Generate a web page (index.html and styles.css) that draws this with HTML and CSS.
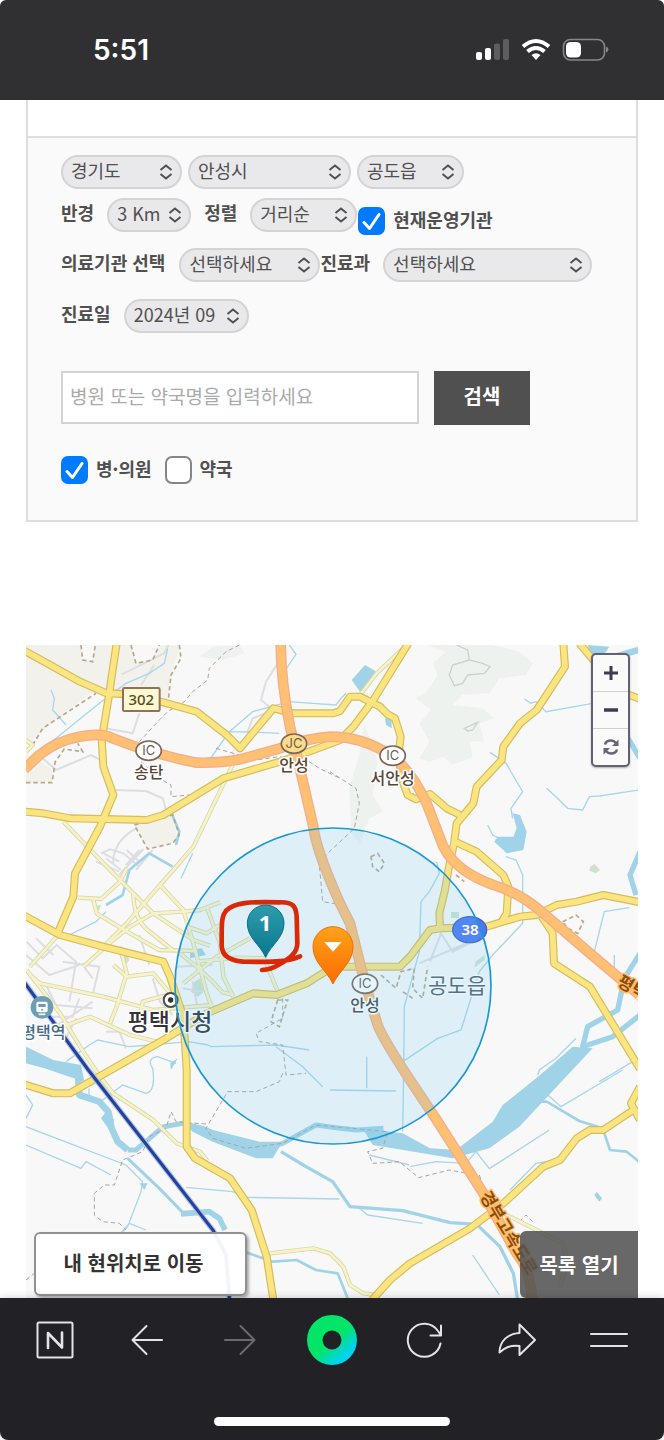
FILE: index.html
```html
<!DOCTYPE html>
<html lang="ko">
<head>
<meta charset="utf-8">
<meta name="viewport" content="width=device-width, initial-scale=1">
<title>병원·약국 찾기</title>
<link rel="stylesheet" href="styles.css">
</head>
<body>
<header class="status">
  <time class="clock">5:51</time>
  <svg class="status-icons" width="134" height="24" viewBox="475 38 134 24" aria-hidden="true">
    <g fill="#fff"><rect x="476" y="52" width="6" height="8" rx="2"/><rect x="485" y="48" width="6" height="12" rx="2"/></g>
    <g fill="#5d5d60"><rect x="494" y="43.500" width="6" height="16.500" rx="2"/><rect x="503" y="39" width="6" height="21" rx="2"/></g>
    <g fill="none" stroke="#fff" stroke-width="4"><path d="M523 46.500Q536 35.500 549 46.500"/><path d="M527.500 51.500Q536 44.500 544.500 51.500"/></g>
    <path d="M531.500 55Q536 51.500 540.500 55L536 60Z" fill="#fff"/>
    <rect x="563.500" y="39.500" width="41" height="20.500" rx="7" fill="none" stroke="#87878a" stroke-width="1.600"/>
    <rect x="566" y="42" width="15" height="15.500" rx="4.500" fill="#fff"/>
    <path d="M606 46.500q2.500 1 2.500 3t-2.500 3z" fill="#87878a"/>
  </svg>
</header>

<main class="page">
  <form class="search">
    <div class="filters">
      <div class="row row-region">
        <select class="pick w-121" aria-label="시도"><option>경기도</option></select>
        <select class="pick w-163" aria-label="시군구"><option>안성시</option></select>
        <select class="pick w-107" aria-label="읍면동"><option>공도읍</option></select>
      </div>
      <div class="row row-range">
        <div class="field"><label for="radius">반경</label><select class="pick w-84" id="radius"><option>3 Km</option></select></div>
        <div class="field field-sort"><label for="sort">정렬</label><select class="pick w-107" id="sort"><option>거리순</option></select></div>
        <label class="check check-low"><input type="checkbox" checked><span>현재운영기관</span></label>
      </div>
      <div class="row row-type">
        <div class="field field-wide"><label for="kind">의료기관 선택</label><select class="pick w-141" id="kind"><option>선택하세요</option></select></div>
        <div class="field"><label for="dept">진료과</label><select class="pick w-209" id="dept"><option>선택하세요</option></select></div>
      </div>
      <div class="row row-date">
        <div class="field"><label for="day">진료일</label><select class="pick w-125" id="day"><option>2024년 09</option></select></div>
      </div>
      <div class="row row-query">
        <input class="query" type="text" placeholder="병원 또는 약국명을 입력하세요" aria-label="병원 또는 약국명">
        <button class="go" type="button">검색</button>
      </div>
      <div class="row row-kinds">
        <label class="check"><input type="checkbox" checked><span>병·의원</span></label>
        <label class="check"><input type="checkbox"><span>약국</span></label>
      </div>
    </div>
  </form>

  <section class="map" aria-label="지도">
    <svg class="map-art" viewBox="0 0 1836 1959" role="img" aria-label="안성시 공도읍 주변 지도">
      <defs>
        <linearGradient id="teal" x1="0" y1="0" x2="0" y2="1"><stop offset="0" stop-color="#2f9cac"/><stop offset="1" stop-color="#08788f"/></linearGradient>
        <linearGradient id="amber" x1="0" y1="0" x2="0" y2="1"><stop offset="0" stop-color="#ffa21a"/><stop offset="1" stop-color="#fb6c00"/></linearGradient>
        <path id="motorway-a" d="M-5 372L40 330Q90 288 160 275T260 280L322 303Q440 340 512 353Q580 355 642 343L762 310Q850 278 912 275Q1010 275 1092 330Q1152 370 1202 475L1252 605Q1290 680 1402 720Q1485 745 1552 805L1692 925L1840 1050"/>
        <path id="motorway-b" d="M764 -5Q765 110 792 245L832 415L862 545Q870 615 942 775L972 835L1017 1015L1055 1140Q1070 1180 1152 1305L1232 1425L1372 1645L1472 1825Q1517 1880 1517 1965"/>
        <g id="main-roads">
          <path d="M-5 17L82 65L162 110L242 145L292 147L412 172L512 200L602 270L642 310L742 190L802 205L922 205L942 198L972 155L1002 155L1062 185L1085 208L1107 220L1124 275L1117 335L1130 410L1145 450L1170 463L1212 447L1262 490L1302 510"/>
          <path d="M272 -5L254 115L250 145L227 285L232 365L262 450L222 545L147 685L142 755L97 860"/>
          <path d="M-5 500L52 505L132 520L362 525L412 510L592 400L762 350L862 315L942 285L982 245L1042 165L1147 -5"/>
          <path d="M1612 -5L1617 65L1532 195L1482 235L1432 305L1427 345L1352 425L1342 475L1292 535L1284 595L1267 675L1257 735L1240 805L1242 850"/>
          <path d="M1287 590L1352 620L1432 690L1447 725L1442 805L1427 830"/>
          <path d="M1660 -5L1702 45L1772 135L1842 162"/>
          <path d="M-5 812L102 870L232 905L412 950L432 995L472 1115L482 1275L482 1505L507 1540L612 1600L677 1695L722 1835L742 1965"/>
          <path d="M-5 1318L82 1345L132 1345L412 1185L542 1105L682 1045L752 1050L842 1015L922 965L1122 965L1152 935L1212 855L1242 850L1382 845L1482 815L1532 810L1592 780L1652 770L1732 750L1842 772"/>
          <path d="M1547 815L1580 865L1584 955L1692 1025L1842 1272"/>
          <path d="M1038 1965L1092 1905L1152 1855L1332 1750L1432 1675L1552 1565L1602 1545L1652 1480L1692 1455L1732 1455L1822 1395M1842 1325L1815 1375L1842 1425"/>
        </g>
        <g id="side-roads">
          <path d="M622 355L502 605L442 675L402 720L302 835L232 905"/>
          <path d="M112 530L252 675L322 745L382 805L502 885L552 902"/>
          <path d="M157 758L225 762L282 710L302 670"/>
          <path d="M202 765L212 805L312 865L400 915L512 918"/>
          <path d="M402 720L472 795L502 895L542 1045L562 1100"/>
          <path d="M582 772L522 795L472 800L382 805L312 845L262 885L172 965"/>
          <path d="M542 785L582 895L592 995L622 1055"/>
          <path d="M672 880L572 935L472 1015"/>
          <path d="M462 925L512 965L560 1010L590 1042L622 1050"/>
          <path d="M512 950L632 938L715 940L757 1045"/>
          <path d="M282 905L302 985L272 1085L252 1135"/>
          <path d="M262 960L302 995L382 985L432 1045"/>
          <path d="M12 990L42 1015L232 1055L382 1095L562 1080"/>
          <path d="M2 975L102 1105L162 1205L222 1295L262 1345L382 1425L452 1495L522 1520L544 1547"/>
          <path d="M82 1155L192 1115L312 1170L392 1190"/>
          <path d="M12 965L92 875"/>
          <path d="M322 745Q322 820 365 855T440 915"/>
          <path d="M482 845L542 865L582 840"/>
          <path d="M422 1050L350 1070L332 1170"/>
          <path d="M1002 150L1052 85L1142 0"/>
          <path d="M732 1825L862 1810L912 1825L952 1865L972 1920L1012 1945L1052 1950"/>
          <path d="M1432 1705L1532 1755L1612 1795L1622 1855L1602 1925"/>
          <path d="M0 285L20 300L0 320"/>
        </g>
      </defs>

      <rect width="1836" height="1959" fill="#f8f8f8"/>
      <path d="M0 0H465L435 90L420 172L252 150L200 140L120 200L0 300ZM0 325L75 370L78 410L0 415ZM325 540L440 510L450 560L455 590L370 612L345 580Z" fill="#f3f1ec"/>
      <path d="M165 0L170 45L200 50L208 0ZM315 0L330 55L380 45L400 0Z" fill="#f9f8f6"/>
      <g fill="#edf2ef">
        <path d="M1200 0L1260 20L1220 55L1235 90L1200 140L1170 160L1215 195L1180 235L1210 290L1180 340L1210 350L1250 335L1280 360L1340 335L1330 290L1375 290L1360 235L1405 220L1370 190L1280 180L1310 150L1390 145L1420 100L1500 90L1520 55L1480 20L1400 0Z"/>
        <path d="M1015 235L1000 330L970 430L975 560L1000 600L1030 520L1070 500L1040 450L1055 350Z"/>
        <path d="M520 35L560 5L640 0L655 25L590 45Z"/>
      </g>
      <path d="M1290 0L1325 15L1330 45L1370 55L1392 65L1375 85L1325 90L1310 115L1285 122L1270 90L1280 60L1330 45M1315 250L1355 232L1340 255L1325 258Z" fill="none" stroke="#ccd0ce" stroke-width="4"/>
      <g fill="#cee2cc"><path d="M1692 665l14-8 16 18-12 10-20-8zM1275 801h24v18h-24zM1348 950l28-20v15l-30 22zM280 930l25-8 5 24-14 18zM505 1010l18-10 10 40-16 15-22-15z"/><path d="M210 783l15-4-6 20z"/></g>

      <g class="minor">
        <path d="M238 250L320 265L340 205M287 88L415 25L427 0M345 120L385 60M730 185L705 165L720 110L765 40M665 260L680 220L730 200M50 340L90 375L195 330L225 345M262 435L360 438L410 460L422 500M225 625L252 613L292 625L340 665M262 655Q260 590 330 550M352 612L280 690M300 660L340 615M380 615L330 675M240 640L285 675M302 615L340 650"/>
        <path d="M2 890L50 940L92 900L150 950L130 1070M0 930L70 990L160 960M30 880L82 930M60 1020L90 1080L200 1090M110 950L220 965L200 1050M170 960L200 1000M50 1115L140 1115L160 1060M65 1160L200 1070M120 1180L150 1120M240 1160L280 1160L300 1210M340 870L370 960M380 1000L402 1070L440 1110M500 1010L515 1090M470 1030L530 1040M450 965L560 960M232 625L280 650M210 650L280 680"/>
        <path d="M1212 950L1245 865L1280 920L1380 870M1180 955L1380 870"/>
      </g>
      <g class="stream">
        <path d="M75 135L85 160L80 195L120 240M65 300L220 175L300 115L370 85L415 55L425 10M465 700L500 625M790 0L810 28L765 95M550 345L610 260L680 200L790 170L860 175L930 180L945 160L960 145M610 260L700 262L760 265M130 870L210 830L240 800M1495 162L1515 175L1530 170L1560 200L1700 175M1392 322L1440 355L1490 440L1455 490L1460 520M1562 430L1600 465L1625 490L1670 495L1690 455L1720 453L1837 435M1385 540L1400 570L1420 580M1440 635L1470 645L1490 690L1490 835L1400 930L1360 980L1305 1155L1235 1180L1130 1250M1232 650L1240 685L1210 740L1185 770L1180 920L1135 1085L1133 1275L1130 1460M1022 1235V1330M912 1335L1110 1338M1705 920L1735 800L1810 788M1765 930V985M1837 1240L1720 1310"/>
        <path d="M120 1250L190 1200L215 1185L310 1205L370 1200L490 1190L545 1200L555 1205L750 1200L850 1215M190 1330Q180 1370 230 1365L290 1320L360 1345Q390 1340 380 1270Q360 1240 395 1235L450 1255M0 1445L300 1560L350 1610L345 1640L305 1745L280 1770L310 1735L360 1755M0 1500L165 1570L180 1550L255 1590M0 1420L20 1380L0 1350M480 1627L620 1640L660 1657L940 1662M750 1205L830 1265L890 1325M1152 1565L1230 1550L1320 1555L1350 1520L1390 1571L1570 1455M1560 1345L1605 1385L1790 1275M1452 1635L1530 1555L1590 1545M1000 1690L1025 1710L1190 1735M1340 1830L1420 1950M1030 1530L1150 1560M1535 1290L1540 1275L1590 1240L1650 1180"/>
      </g>
      <g class="river">
        <path stroke-width="20" d="M155 1270L160 1350L220 1370L247 1400L257 1450L275 1490L305 1515"/>
        <path stroke-width="15" d="M305 1515L330 1515L412 1445L472 1435L530 1450L600 1480L700 1515L770 1495L870 1440L942 1450L992 1455L1072 1450"/>
        <path stroke-width="9" d="M305 1540L400 1630L470 1702L530 1700"/>
        <path stroke-width="17" d="M465 1707L550 1700L580 1720L597 1755"/>
        <path stroke-width="10" d="M765 1520L840 1565L920 1610L972 1685L1130 1697L1272 1733L1352 1738L1422 1805L1462 1885L1475 1965"/>
        <path stroke-width="8" d="M660 1822L740 1850L812 1845L870 1875L935 1885L965 1960M1512 1370L1562 1370L1660 1428L1730 1450L1752 1515L1802 1520L1842 1552"/>
        <path stroke-width="16" d="M1842 1110L1760 1175L1670 1205L1685 1145L1775 1095L1795 1000L1842 925M1842 620L1812 690L1830 750M1842 340L1800 270"/>
        <path stroke-width="8" d="M440 665L370 625L310 675L290 750L240 780M435 500L460 560L450 600"/>
      </g>
      <g fill="#a0d3e7">
        <path d="M470 1430L560 1455L700 1490L770 1490L740 1540L690 1540L560 1490L500 1460ZM1010 1450L1130 1465L1212 1510L1290 1515L1400 1430L1430 1380L1512 1315L1560 1275L1640 1205L1700 1210L1480 1445L1390 1510L1280 1540L1100 1510L1040 1500Z"/>
        <path d="M0 1205L82 1245L165 1260L175 1310L130 1295L55 1270L0 1255ZM240 1400L265 1425L250 1455L225 1420Z"/>
        <path d="M977 105L1017 60L1052 80L1002 140ZM1460 505L1482 510L1502 560L1492 615L1442 625L1405 590L1415 575L1462 575L1472 550ZM1077 220L1097 220L1097 250L1080 240ZM1685 0L1750 5L1730 35L1700 45ZM1750 30L1837 5V25L1770 45ZM492 915L527 910L540 930L492 940ZM1705 1650L1712 1640L1728 1660L1720 1670ZM430 1235L435 1275L455 1240L432 1255ZM340 1615L365 1615L355 1635Z"/>
      </g>
      <g class="dashes">
        <path d="M165 0L170 45L200 50L208 0M315 0L330 55L380 45L400 0M460 0L465 40L435 90L427 165M20 300L50 250L210 145M0 413H78L88 350L115 312L170 320L155 295M325 540L440 510L460 570L440 595L365 612ZM1035 635L1055 625L1075 655L1060 680L1040 665ZM1290 690L1315 710M1610 830L1650 810L1672 830L1655 865L1625 850ZM1065 990L1110 1030L1125 980L1165 970L1160 1030L1190 1060L1205 965M1160 1060L1130 1040M755 1065H785L760 1145L735 1130Z"/>
        <path class="boundary" d="M640 0L600 20L550 70L545 105L500 140L475 170L425 200L400 225L340 290M345 350L400 400L435 420L435 455L490 450M570 310L640 330L690 345L760 335L850 350L880 370L942 400M912 380L990 430L1000 475L985 550L900 630L880 660L890 770L950 780M770 1060L770 1120L690 1165L700 1190L770 1200L780 1290L840 1285M770 1285L760 1310L690 1340H605L540 1450L560 1480L660 1510L770 1495L870 1440L1085 1460L1070 1510L1025 1520L1040 1555L1120 1550L1178 1598L1270 1575L1350 1590M540 1437L450 1430L435 1400L420 1450L370 1475L350 1520L290 1545L265 1620H235L205 1645V1710L230 1730L280 1735L300 1755M1360 1590L1380 1650M1480 1730L1500 1710L1525 1735M0 1905L25 1885"/>
      </g>

      <use href="#side-roads" class="line side-case"/>
      <use href="#side-roads" class="line side-fill"/>
      <use href="#main-roads" class="line main-case"/>
      <use href="#main-roads" class="line main-fill"/>
      <g class="line"><use href="#motorway-a" class="way-case"/><use href="#motorway-b" class="way-case"/><use href="#motorway-a" class="way-fill"/><use href="#motorway-b" class="way-fill"/></g>
      <path d="M-5 1012L187 1275L562 1757L600 1830L610 1959" fill="none" stroke="#a9c0e4" stroke-width="16"/>
      <path d="M-5 1012L187 1275L562 1757L600 1830L610 1959" fill="none" stroke="#23409b" stroke-width="9"/>

      <g class="badge">
        <rect x="291" y="129" width="110" height="69" rx="4" fill="#fffad2" stroke="#94705b" stroke-width="6" class="plate"/>
        <ellipse cx="368" cy="317" rx="38" ry="29"/><ellipse cx="804" cy="296" rx="38" ry="29" class="junction"/><ellipse cx="1100" cy="332" rx="38" ry="29"/><ellipse cx="1017" cy="1016" rx="38" ry="29"/>
      </g>
      <ellipse cx="1331" cy="854" rx="51" ry="39" fill="#4d78f4" stroke="#3e62bd" stroke-width="4"/>
      <circle cx="434" cy="1065" r="21" fill="#fff" stroke="#4b4b4e" stroke-width="6"/><circle cx="434" cy="1065" r="8" fill="#333"/>
      <circle cx="48" cy="1087" r="34" fill="#6f9db3"/>
      <rect x="31" y="1070" width="34" height="32" rx="6" fill="#fff"/><path d="M37 1077h22v9h-22z" fill="#6f9db3"/><circle cx="48" cy="1094" r="3" fill="#6f9db3"/><path d="M38 1108h20" stroke="#fff" stroke-width="5"/>

      <g class="label" text-anchor="middle">
        <text x="346" y="180" class="route">302</text>
        <text x="368" y="330" class="ic">IC</text><text x="804" y="309" class="ic">JC</text><text x="1100" y="345" class="ic">IC</text><text x="1017" y="1029" class="ic">IC</text>
        <text x="368" y="399" class="town">송탄</text><text x="804" y="379" class="town">안성</text><text x="1100" y="416" class="town">서안성</text><text x="1017" y="1099" class="town gray">안성</text>
        <text x="432" y="1155" class="city">평택시청</text>
        <text x="1293" y="1044" class="city light">공도읍</text>
        <text x="52" y="1179" class="town station">평택역</text>
        <text class="road" transform="translate(1360 1652) rotate(59)" text-anchor="start">경부고속도로</text>
        <text class="road" transform="translate(1770 1020) rotate(30)" text-anchor="start">평택</text>
      </g>

      <circle cx="921" cy="1023" r="474" fill="#68c6f8" fill-opacity=".18" stroke="#1b98d4" stroke-width="5"/>
      <text x="1332" y="871" class="shield" text-anchor="middle">38</text>

      <path d="M719 937C702 898 664 879 664 835A55 55 0 0 1 774 835C774 879 736 898 719 937Z" fill="url(#teal)" stroke="#087087" stroke-width="3"/>
      <text x="717" y="857" class="pin-number" text-anchor="middle">1</text>
      <path d="M921 1017C902 975 861 954 861 905A60 60 0 0 1 981 905C981 954 940 975 921 1017Z" fill="url(#amber)" stroke="#e86f08" stroke-width="3"/>
      <path d="M895 891H947L921 920Z" fill="#fff"/>
      <path d="M600 797C625 773 670 769 760 772C802 770 810 785 812 815L814 895C814 925 790 941 758 959Q735 973 708 975M822 934C780 953 720 951 650 950C605 946 587 927 587 900C588 850 583 811 603 795" fill="none" stroke="#d92909" stroke-width="14" stroke-linecap="round" stroke-linejoin="round"/>
    </svg>

    <div class="zoom">
      <button type="button" aria-label="확대"><svg width="16" height="16" viewBox="0 0 16 16"><path d="M8 1v14M1 8h14" stroke="#3d3d50" stroke-width="3"/></svg></button>
      <button type="button" aria-label="축소"><svg width="16" height="16" viewBox="0 0 16 16"><path d="M1 8h14" stroke="#3d3d50" stroke-width="3.500"/></svg></button>
      <button type="button" aria-label="새로고침"><svg width="18" height="18" viewBox="0 0 18 18"><path d="M3 6.500Q4 2.500 9 2.500Q12 2.500 14 5M15 11.500Q14 15.500 9 15.500Q6 15.500 4 13" fill="none" stroke="#656575" stroke-width="2.500"/><path d="M16.500 1.500V8H10ZM1.500 16.500V10H8Z" fill="#656575"/></svg></button>
    </div>
    <button class="locate" type="button">내 현위치로 이동</button>
    <button class="open-list" type="button">목록 열기</button>
  </section>
</main>

<footer class="browser">
  <nav class="tools" aria-label="브라우저">
    <button type="button" aria-label="홈"><svg width="38" height="38" viewBox="0 0 38 38"><rect x="1.500" y="1.500" width="35" height="35" rx="1.500"/><path d="M12 27V12L26 26.500V11.500" stroke-width="2.600"/></svg></button>
    <button type="button" aria-label="뒤로"><svg width="38" height="38" viewBox="0 0 38 38"><path d="M34 19H5M18.500 5L4.500 19L18.500 33"/></svg></button>
    <button type="button" aria-label="앞으로" class="dim"><svg width="38" height="38" viewBox="0 0 38 38"><path d="M4 19H33M19.500 5L33.500 19L19.500 33"/></svg></button>
    <button type="button" aria-label="그린닷"><svg width="50" height="50" viewBox="0 0 50 50"><defs><linearGradient id="dot" x1="0.200" y1="0.100" x2="0.900" y2="0.900"><stop offset=".5" stop-color="#02e568"/><stop offset="1" stop-color="#00d3ec"/></linearGradient></defs><circle cx="25" cy="25" r="17.200" stroke="url(#dot)" stroke-width="15.500"/></svg></button>
    <button type="button" aria-label="새로고침"><svg width="38" height="38" viewBox="0 0 38 38"><path d="M35.500 22.500A16.500 16.500 0 1 1 33 10L35.500 13.500M36 4.500V14.500H25.500"/></svg></button>
    <button type="button" aria-label="공유"><svg width="38" height="38" viewBox="0 0 38 38"><path d="M21.500 3.500L37 19L21.500 34V25C12 24 7 26.500 1.500 31.500C1.500 20 10 12.500 21.500 12Z"/></svg></button>
    <button type="button" aria-label="메뉴"><svg width="38" height="38" viewBox="0 0 38 38"><path d="M1 13H37M1 25H37"/></svg></button>
  </nav>
  <div class="home-bar"></div>
</footer>
</body>
</html>
```

FILE: styles.css
```css
* { box-sizing: border-box; }

body {
  margin: 0;
  min-height: 100vh;
  display: flex;
  flex-direction: column;
  background: #fff;
  color: #505050;
  font: 400 18px/24px "Noto Sans CJK KR", "Noto Sans", sans-serif;
}

button, input, select { font: inherit; color: inherit; margin: 0; }
button { padding: 0; border: 0; background: none; }

.status {
  display: flex;
  align-items: center;
  justify-content: space-between;
  height: 100px;
  padding: 0 55px 0 93px;
  background: #303032;
  border-radius: 6px 6px 0 0;
}
.clock { color: #fff; font: 600 28px/32px Inter, sans-serif; }
.status-icons { display: block; }

.page { flex: 1; padding: 0 26px; }

.search { padding-top: 36px; border: 2px solid #dedede; border-width: 0 2px 2px; }
.filters { padding: 17px 33px 36px; background: #fafafa; border-top: 2px solid #dedede; }
.row { display: flex; align-items: flex-start; }
.row-region { gap: 6px; }
.row-range { margin-top: 9px; min-height: 37px; }
.row-type { margin-top: 13px; }
.row-date { margin-top: 17px; }
.row-query { margin-top: 38px; gap: 15px; }
.row-kinds { margin-top: 31px; gap: 13px; }

.field { display: flex; gap: 13px; }
.field-sort { margin-left: 13px; }
.field-wide { gap: 14px; }
label { font-weight: 700; line-height: 28px; white-space: nowrap; }

.pick {
  appearance: none;
  height: 34px;
  padding: 0 28px 5px 8px;
  border: 2px solid #d4d4d6;
  border-radius: 17px;
  background: #e9e9eb url("data:image/svg+xml,%3Csvg xmlns='http://www.w3.org/2000/svg' width='14' height='16' fill='none' stroke='%23505050' stroke-width='2'%3E%3Cpath d='M1.500 6L7 1.500L12.500 6M1.500 10L7 14.500L12.500 10'/%3E%3C/svg%3E") no-repeat right 7px center;
}
.w-84 { width: 84px; }
.w-107 { width: 107px; }
.w-121 { width: 121px; }
.w-125 { width: 125px; }
.w-141 { width: 141px; }
.w-163 { width: 163px; }
.w-209 { width: 209px; }

.check { display: flex; gap: 8px; line-height: 24px; }
.check-low { align-self: flex-end; margin-left: 1px; }
.check input {
  appearance: none;
  width: 27px;
  height: 28px;
  border: 2px solid #858585;
  border-radius: 7px;
  background: #fff;
}
.check input:checked {
  border-color: #007aff;
  background: #007aff url("data:image/svg+xml,%3Csvg xmlns='http://www.w3.org/2000/svg' width='19' height='19' fill='none' stroke='white' stroke-width='3' stroke-linecap='round' stroke-linejoin='round'%3E%3Cpath d='M2 10.500L7.500 16.500L17 2.500'/%3E%3C/svg%3E") no-repeat center;
}

.query {
  flex: 0 1 358px;
  min-width: 0;
  height: 53px;
  padding: 0 7px 4px;
  border: 2px solid #d3d3d3;
  background: #fff;
  font-size: 19px;
}
.query::placeholder { color: #aaa; }
.go { width: 96px; height: 54px; padding-bottom: 5px; background: #505050; color: #fff; font-size: 20px; font-weight: 700; }

.map { position: relative; margin-top: 123px; overflow: hidden; }
.map-art { display: block; width: 100%; height: auto; }

.minor { fill: none; stroke: #dddee2; stroke-width: 6; }
.stream { fill: none; stroke: #a8d6ea; stroke-width: 4; }
.river { fill: none; stroke: #a0d3e7; stroke-linejoin: round; }
.dashes { fill: none; stroke: #b9a888; stroke-width: 5; stroke-dasharray: 13 9; }
.boundary { stroke: #aaa39c; stroke-width: 3; }
.line { fill: none; stroke-linejoin: round; }
.side-case { stroke: #d9d5a8; stroke-width: 13; }
.side-fill { stroke: #f7f3c9; stroke-width: 8; }
.main-case { stroke: #d1bd5b; stroke-width: 24; }
.main-fill { stroke: #fce481; stroke-width: 17; }
.way-case { stroke: #f3ae8a; stroke-width: 32; }
.way-fill { stroke: #ffc073; stroke-width: 24; }

.badge { fill: #fff; stroke: #7c6658; stroke-width: 5; }
.badge .junction { fill: #fcdc8b; }
.label { fill: #594538; stroke: #fff; stroke-width: 9; stroke-linejoin: round; paint-order: stroke; font-weight: 700; }
.route { font: 500 45px "Noto Sans", sans-serif; fill: #5c4a20; stroke: none; }
.ic { font: 400 39px Inter, sans-serif; stroke: none; fill: #705c50; }
.town { font-size: 48px; font-weight: 500; }
.gray { fill: #4c4540; }
.city { font-size: 69px; font-weight: 500; fill: #343438; }
.light { font-size: 63px; fill: #56606a; font-weight: 400; }
.station { fill: #3e6b87; }
.road { font-size: 51px; fill: #8e4d0c; stroke: #ffbd69; }
.shield { fill: #fff; font: 600 45px "Noto Sans", sans-serif; }
.pin-number { fill: #fff; font: 700 66px "Noto Sans", sans-serif; }

.zoom {
  position: absolute;
  top: 8px;
  right: 8px;
  width: 39px;
  border: 2px solid #626270;
  border-radius: 5px;
  background: #fafafa;
  box-shadow: 0 1px 2px rgba(0, 0, 0, .3);
}
.zoom button { display: flex; align-items: center; justify-content: center; width: 100%; height: 36px; }
.zoom button + button { height: 37px; border-top: 1px solid #d0d0d0; }

.locate, .open-list { position: absolute; font-size: 20px; font-weight: 700; }
.locate {
  left: 8px;
  bottom: 2px;
  width: 213px;
  height: 64px;
  padding-bottom: 3px;
  padding-right: 14px;
  border: 2px solid #919191;
  border-radius: 6px;
  background: rgba(255, 255, 255, .94);
  box-shadow: 2px 2px 3px rgba(0, 0, 0, .3);
  color: #333;
}
.open-list {
  right: 0;
  bottom: 0;
  width: 118px;
  height: 67px;
  border-radius: 6px 0 0 6px;
  background: rgba(80, 80, 80, .86);
  color: #fff;
}

.browser {
  position: relative;
  display: flex;
  flex-direction: column;
  align-items: center;
  height: 142px;
  padding-bottom: 14px;
  background: #212126;
  border-radius: 0 0 8px 8px;
  box-shadow: 0 0 8px rgba(0, 0, 0, .2);
}
.tools { display: flex; width: 100%; padding: 0 9px; }
.tools button { flex: 1; display: flex; align-items: center; justify-content: center; height: 84px; }
.tools svg { fill: none; stroke: #e4e4e6; stroke-width: 2; stroke-linecap: round; stroke-linejoin: round; }
.tools .dim svg { stroke: #6b6b6f; }
.home-bar { width: 236px; height: 9px; margin-top: auto; border-radius: 5px; background: #fff; }
```
